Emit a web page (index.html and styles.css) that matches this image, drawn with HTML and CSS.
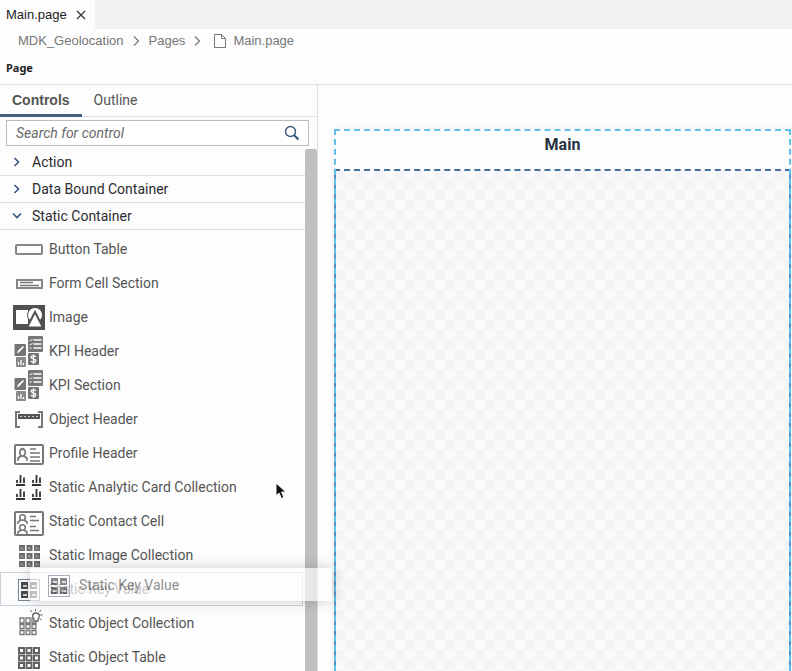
FILE: index.html
```html
<!DOCTYPE html>
<html lang="en">
<head>
<meta charset="utf-8">
<title>Main.page</title>
<link rel="stylesheet" href="styles.css">
</head>
<body>
<svg class="defs" aria-hidden="true">
  <defs>
    <g id="chev"><path d="M1.5 1l4 4-4 4" fill="none" stroke="currentColor" stroke-width="1.6"/></g>
    <g id="mini-bars"><path d="M0 10h9M1 8v-3M4.500 8v-8M8 8v-5.500" fill="none" stroke="#333" stroke-width="1.800"/></g>
    <g id="person" fill="none" stroke="#77777a" stroke-width="1.600"><circle cx="4.500" cy="3.500" r="2.800"/><path d="M3 6l-3 2v2M6 6l3 2v2"/></g>
    <g id="kpi">
      <rect x="15" y="0" width="15" height="16" rx="1" fill="#77777a"/>
      <path d="M20.500 4h8M20.500 8h8M20.500 12h8" stroke="#fff" stroke-width="1.300"/>
      <path d="M16.500 4l1 1 2-2M16.500 8l1 1 2-2M16.500 12h2" fill="none" stroke="#fff"/>
      <rect x="1.500" y="8" width="11.500" height="12" rx="1" fill="#747477"/>
      <path d="M4 17.500l1-3 5-4.500 1 1-4.500 5z" fill="#fff"/>
      <rect x="3" y="21" width="10" height="10" rx="1" fill="#8a8a8d"/>
      <path d="M5.500 29v-3M8 29v-5M10.500 29v-2" stroke="#fff" stroke-width="1.300"/>
      <rect x="15" y="17" width="11" height="12" rx="1" fill="#747477"/>
      <path d="M22.800 20.800c-1-1.300-4.600-1.300-4.600 .5s4.600 1.300 4.600 3.400-3.600 2-4.800.4M20.500 18.500v9.500" fill="none" stroke="#fff" stroke-width="1.400"/>
    </g>
    <g id="keyvalue">
      <rect x="5.500" y="7.500" width="21" height="21" fill="#fff" stroke="#75869b"/>
      <path d="M8 10h7v7H8zM17 10h7v7h-7zM8 19h7v7H8zM17 19h7v7h-7z" fill="#4b4c50"/>
      <path d="M10 14h4M19 14h4M10 23h4M19 23h4" stroke="#fff" stroke-width="1.500"/>
    </g>
    <g id="img-cell"><rect width="6" height="6" fill="#6a6a6d"/><path d="M1.500 2l3 2.500M1.500 4.500l1-1" stroke="#ccc" stroke-width=".8"/></g>
    <g id="img-row"><use href="#img-cell"/><use href="#img-cell" x="7.500"/><use href="#img-cell" x="15"/></g>
  </defs>
</svg>

<div class="app">
  <div class="filetabs">
    <div class="filetab">
      <span>Main.page</span>
      <button class="close" aria-label="Close"><svg width="10" height="10"><path d="M1 1l8 8M9 1l-8 8" stroke="#333" stroke-width="1.200"/></svg></button>
    </div>
  </div>
  <nav class="crumbs" aria-label="Breadcrumb">
    <a href="#">MDK_Geolocation</a>
    <svg width="7" height="10"><path d="M1 0.500l4.500 4.500-4.500 4.500" fill="none" stroke="#777" stroke-width="1.200"/></svg>
    <a href="#">Pages</a>
    <svg width="7" height="10"><path d="M1 0.500l4.500 4.500-4.500 4.500" fill="none" stroke="#777" stroke-width="1.200"/></svg>
    <a href="#" class="crumb-file"><svg width="12" height="14"><path d="M.5.500h7l4 4v9H.500zM7.500.500v4h4" fill="none" stroke="#777"/></svg>Main.page</a>
  </nav>
  <h1 class="title">Page</h1>

  <main class="work">
    <aside class="panel">
      <div class="tabs" role="tablist">
        <button class="tab active" role="tab" aria-selected="true">Controls</button>
        <button class="tab" role="tab" aria-selected="false">Outline</button>
      </div>
      <div class="search">
        <input type="text" placeholder="Search for control" aria-label="Search for control">
        <button aria-label="Search"><svg width="16" height="16"><circle cx="6.500" cy="6.500" r="5" fill="none" stroke="#35567c" stroke-width="1.400"/><path d="M10 10l4.500 4.500" stroke="#35567c" stroke-width="2.200"/></svg></button>
      </div>
      <div class="list-area">
        <div class="list">
          <button class="group" aria-expanded="false"><svg width="8" height="10"><use href="#chev"/></svg>Action</button>
          <button class="group" aria-expanded="false"><svg width="8" height="10"><use href="#chev"/></svg>Data Bound Container</button>
          <button class="group open" aria-expanded="true"><svg width="8" height="10"><use href="#chev"/></svg>Static Container</button>
          <ul class="items">
            <li><svg class="ic" viewBox="0 0 32 34"><rect x="3" y="13" width="26" height="9" rx="1" fill="#fff" stroke="#85858a" stroke-width="2"/></svg>Button Table</li>
            <li><svg class="ic" viewBox="0 0 32 34"><rect x="4" y="14" width="25" height="8" fill="#fff" stroke="#85858a" stroke-width="2"/><path d="M7 16.500h13M7 19.500h19" stroke="#77777a" stroke-width="1.300"/></svg>Form Cell Section</li>
            <li><svg class="ic" viewBox="0 0 32 34"><rect x="0" y="5" width="32" height="25" fill="#505053"/><rect x="3" y="10" width="12" height="14" fill="#fff"/><circle cx="22" cy="15" r="7.500" fill="#fff" stroke="#505053"/><path d="M22 12l8 15.500H14z" fill="#fff" stroke="#505053" stroke-width="2"/></svg>Image</li>
            <li><svg class="ic" viewBox="0 0 32 34"><use href="#kpi" y="2"/></svg>KPI Header</li>
            <li><svg class="ic" viewBox="0 0 32 34"><use href="#kpi" y="2"/></svg>KPI Section</li>
            <li><svg class="ic" viewBox="0 0 32 34"><path d="M7 10H3v15h4M25 10h4v15h-4" fill="none" stroke="#77777a" stroke-width="2"/><rect x="5" y="12" width="22" height="5" fill="#555558"/><path d="M7 14.500h19" stroke="#ccc" stroke-dasharray="2 2"/></svg>Object Header</li>
            <li><svg class="ic" viewBox="0 0 32 34"><rect x="2" y="9" width="28" height="19" rx="1" fill="#fff" stroke="#77777a" stroke-width="2"/><g transform="translate(5 12) scale(1 1.300)"><use href="#person"/></g><path d="M17 13h6M17 17h10M17 21h10M17 25h10" stroke="#77777a" stroke-width="1.500"/></svg>Profile Header</li>
            <li><svg class="ic" viewBox="0 0 32 34"><use href="#mini-bars" x="3" y="5"/><use href="#mini-bars" x="19" y="5"/><use href="#mini-bars" x="3" y="19"/><use href="#mini-bars" x="19" y="19"/></svg>Static Analytic Card Collection</li>
            <li><svg class="ic" viewBox="0 0 32 34"><rect x="2" y="8" width="28" height="23" rx="1" fill="#fff" stroke="#77777a" stroke-width="2"/><use href="#person" x="5" y="10"/><use href="#person" x="5" y="20"/><path d="M17 12.500h6M17 16.500h9M17 22.500h6M17 26.500h9" stroke="#77777a" stroke-width="1.600"/></svg>Static Contact Cell</li>
            <li><svg class="ic" viewBox="0 0 32 34"><use href="#img-row" x="6" y="7"/><use href="#img-row" x="6" y="15"/><use href="#img-row" x="6" y="23"/></svg>Static Image Collection</li>
            <li class="picked"><svg class="ic" viewBox="0 0 32 34"><use href="#keyvalue"/></svg><span>Static Key Value</span>
              <div class="ghost"><svg class="ic" viewBox="0 0 32 34"><use href="#keyvalue"/></svg>Static Key Value</div>
            </li>
            <li><svg class="ic" viewBox="0 0 32 34"><path d="M7 12h4v5H7zM13 12h4v5h-4zM19 12h4v5h-4zM7 18.500h4v4H7zM13 18.500h4v4h-4zM19 18.500h4v4h-4zM7 24.500h4v4H7zM13 24.500h4v4h-4zM19 24.500h4v4h-4z" fill="#fff" stroke="#77777a" stroke-width="1.300"/><path d="M21 13c-2-2-2-6 2-6s4 4 2 6v2h-4z" fill="#fff" stroke="#666" stroke-width="1.400"/><path d="M22.500 3v2M17.500 4l1.500 2M28 4l-1.500 2M27 9h2.500M26.500 12.500l2 1.500" stroke="#666"/></svg>Static Object Collection</li>
            <li><svg class="ic" viewBox="0 0 32 34"><path d="M6 8h5v5H6zM13.500 8h5v5h-5zM21 8h5v5h-5zM6 15.500h5v5H6zM13.500 15.500h5v5h-5zM21 15.500h5v5h-5zM6 23h5v5H6zM13.500 23h5v5h-5zM21 23h5v5h-5z" fill="#fff" stroke="#626265" stroke-width="2"/></svg>Static Object Table</li>
          </ul>
        </div>
        <div class="scroll"></div>
      </div>
    </aside>
    <section class="canvas">
      <div class="device">
        <header>Main</header>
        <div class="drop"></div>
      </div>
    </section>
  </main>
  <svg class="pointer" width="12" height="18" aria-hidden="true"><path d="M1 1v13l3-3 2.500 5.500 2.500-1L6.500 10H11z" fill="#111" stroke="#fff"/></svg>
</div>
</body>
</html>
```
FILE: styles.css
```css
* { box-sizing: border-box; }
body { margin: 0; background: #fdfdfd; font: 14px/20px Roboto, sans-serif; color: #555; }
button { border: 0; background: none; padding: 0; font: inherit; color: inherit; }
.defs { position: absolute; width: 0; height: 0; }
.app { position: relative; height: 100vh; display: flex; flex-direction: column; overflow: hidden; }
.filetabs { display: flex; background: #f1f1f4; height: 29px; flex: none; font: 13px/29px "Liberation Sans", sans-serif; color: #222; }
.filetab { display: flex; align-items: center; gap: 9px; padding: 0 9px 0 6px; background: #fdfdfd; }
.close { display: flex; }
.crumbs { display: flex; align-items: center; gap: 9px; height: 24px; padding-left: 18px; flex: none; font: 13px/24px "Liberation Sans", sans-serif; }
.crumbs a { color: #777; text-decoration: none; }
.crumb-file { display: flex; align-items: center; gap: 7px; padding-left: 4px; }
.title { margin: 0; padding: 0 6px; height: 31px; flex: none; font: bold 11px/30px "Noto Sans", sans-serif; color: #222; }
.work { display: flex; flex: 1; min-height: 0; border-top: 1px solid #dcdde6; }
.panel { flex: 0 0 318px; display: flex; flex-direction: column; border-right: 1px solid #dcdde6; min-height: 0; }
.tabs { display: flex; height: 32px; flex: none; border-bottom: 1px solid #dcdde6; }
.tab { padding: 0 12px; height: 32px; border-bottom: 3px solid transparent; }
.tab.active { font-family: "Liberation Sans", sans-serif; font-weight: bold; border-bottom-color: #46617f; }
.search { display: flex; align-items: center; flex: none; height: 26px; margin: 3px 8px 3px 6px; padding: 0 8px 0 9px; border: 1px solid #babbc0; background: #fff; }
.search input { flex: 1; min-width: 0; border: 0; outline: 0; padding: 0; background: none; font: italic 14px/20px Roboto, sans-serif; }
.search input::placeholder { color: #686868; opacity: 1; }
.search button { display: flex; }
.list-area { display: flex; flex: 1; min-height: 0; }
.list { flex: 1; min-width: 0; }
.scroll { width: 12px; background: #c0c0c3; border-radius: 2px 2px 0 0; }
.group { display: flex; align-items: center; gap: 11px; width: 100%; height: 27px; padding-left: 13px; border-bottom: 1px solid #d9dde8; color: #2b2b2e; }
.group svg { color: #35567c; }
.open svg { transform: rotate(90deg); }
.items { list-style: none; margin: 2px 0 0; padding: 0; }
.items li { position: relative; display: flex; align-items: center; gap: 4px; height: 34px; padding-left: 13px; }
.ic { width: 32px; height: 34px; flex: none; }
.items .picked { padding-left: 12px; margin-right: 2px; border: 1px solid #ccd2de; }
.picked > span { color: #6a6a6d; }
.ghost { position: absolute; z-index: 2; left: 29px; top: -5px; width: 302px; height: 33px; display: flex; align-items: center; gap: 4px; padding-left: 13px; background: #fdfdfd; box-shadow: 0 0 14px rgba(0, 0, 0, .3); opacity: .65; }
.pointer { position: absolute; left: 275px; top: 482px; }
.canvas { flex: 1; padding: 44px 1px 0 16px; display: flex; }
.device { position: relative; flex: 1; display: flex; flex-direction: column; margin-bottom: -10px; box-shadow: 0 0 6px rgba(0, 0, 0, .08); }
.device::after { content: ""; position: absolute; inset: 0; border: 2px dashed #62bfe8; }
.device header { height: 40px; padding-top: 2px; background: #fdfdfd; text-align: center; font: bold 16px/28px Roboto, sans-serif; color: #26323f; }
.drop {
  flex: 1;
  border: 2px solid #5c90bb;
  border-top: 2px dashed #456f9d;
  background: repeating-conic-gradient(#f4f4f6 0 25%, #fafafc 0 50%) 19px 9px / 20px 20px;
}
```
